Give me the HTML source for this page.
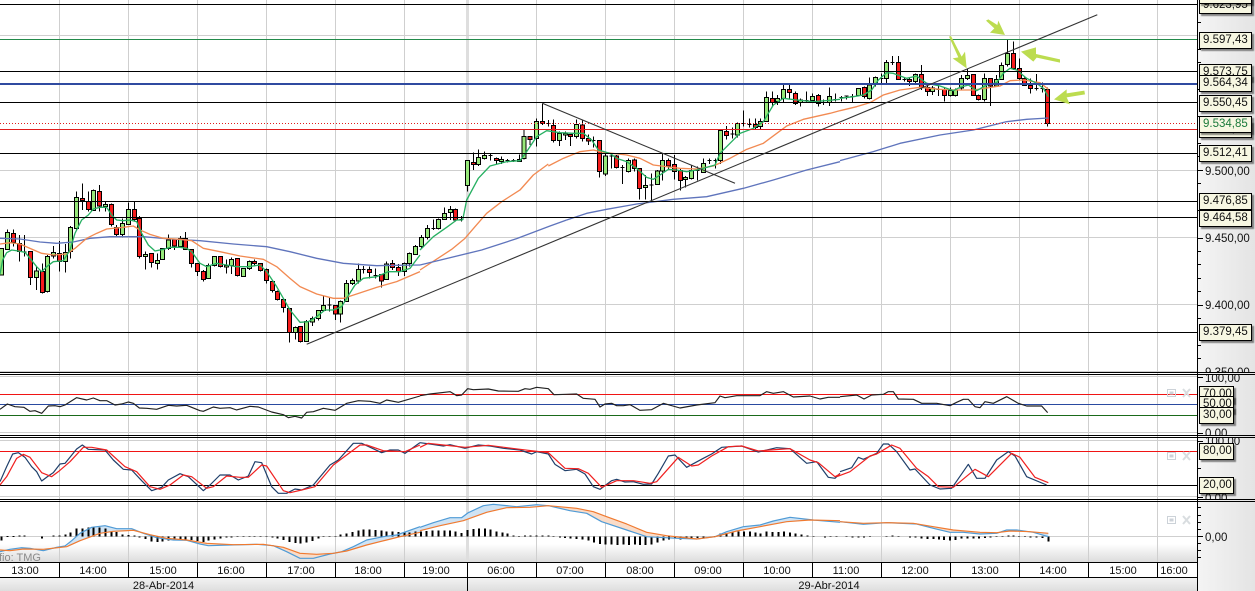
<!DOCTYPE html>
<html><head><meta charset="utf-8"><title>Chart</title>
<style>
html,body{margin:0;padding:0;background:#fff}
#p{position:relative;width:1255px;height:591px;overflow:hidden;font-family:"Liberation Sans",sans-serif}
svg{position:absolute;left:0;top:0}
text{font-family:"Liberation Sans",sans-serif;font-size:11px;fill:#111}
.l{position:absolute;left:1199px;height:15px;line-height:14px;border:1px solid #000;background:#f7f7e2;box-shadow:2px 2px 1px rgba(0,0,0,.45);font-size:11.5px;color:#111;padding-left:3px;box-sizing:content-box;width:48px;white-space:nowrap;overflow:hidden}
.s{width:30px}
.w{fill:none;stroke:#000;stroke-width:3}
.g{fill:#97e87a;stroke:#000;stroke-width:3}
.r{fill:#f61c1c;stroke:#000;stroke-width:3}
.ma{fill:none;stroke-width:4;stroke-linejoin:round}
.gr{stroke:#27b062}.or{stroke:#f28a52}.bl{stroke:#5f74bc}
.rs{fill:none;stroke:#222;stroke-width:3.5;stroke-linejoin:round}
.sb{fill:none;stroke:#1f3f6a;stroke-width:3.6;stroke-linejoin:round}
.sr{fill:none;stroke:#f02020;stroke-width:3.6;stroke-linejoin:round}
.mb{fill:none;stroke:#4f9bd6;stroke-width:3.6;stroke-linejoin:round}
.mo{fill:none;stroke:#f07a30;stroke-width:3.6;stroke-linejoin:round}
.h{fill:none;stroke:#000;stroke-width:6}
.fb{fill:#cfe3f4}.fo{fill:#fadcc8}
.arrow{fill:#bcdc50}
</style></head><body><div id="p">
<svg width="1255" height="591" viewBox="0 0 1255 591">
<defs>
<linearGradient id="gb" x1="0" y1="0" x2="0" y2="1"><stop offset="0" stop-color="#fff"/><stop offset="1" stop-color="#dcdcdc"/></linearGradient>
<linearGradient id="gd" x1="0" y1="0" x2="0" y2="1"><stop offset="0" stop-color="#f4f4f4"/><stop offset="1" stop-color="#dedede"/></linearGradient>
<linearGradient id="gr" x1="0" y1="0" x2="1" y2="0"><stop offset="0" stop-color="#f4f4f4"/><stop offset="1" stop-color="#e4e4e4"/></linearGradient>
<clipPath id="c0"><rect x="1198" y="0" width="57" height="372"/></clipPath>
<clipPath id="c1"><rect x="1198" y="375" width="57" height="60"/></clipPath>
<clipPath id="c2"><rect x="1198" y="438" width="57" height="61"/></clipPath>
</defs>
<rect x="0" y="544" width="1198" height="18" fill="url(#gb)"/>
<!-- grid -->
<g fill="#cfcfcf" shape-rendering="crispEdges">
<rect x="59" y="0" width="1" height="562"/><rect x="128" y="0" width="1" height="562"/><rect x="197" y="0" width="1" height="562"/><rect x="266" y="0" width="1" height="562"/><rect x="335" y="0" width="1" height="562"/><rect x="404" y="0" width="1" height="562"/>
<rect x="466" y="0" width="3" height="562" fill="#dedede"/>
<rect x="536" y="0" width="1" height="562"/><rect x="605" y="0" width="1" height="562"/><rect x="674" y="0" width="1" height="562"/><rect x="743" y="0" width="1" height="562"/><rect x="812" y="0" width="1" height="562"/><rect x="881" y="0" width="1" height="562"/><rect x="950" y="0" width="1" height="562"/><rect x="1019" y="0" width="1" height="562"/><rect x="1088" y="0" width="1" height="562"/><rect x="1157" y="0" width="1" height="562"/>
<rect x="0" y="35" width="1197" height="1"/><rect x="0" y="102" width="1197" height="1"/><rect x="0" y="170" width="1197" height="1"/><rect x="0" y="237" width="1197" height="1"/><rect x="0" y="304" width="1197" height="1"/><rect x="0" y="371" width="1197" height="1"/>
<rect x="0" y="376" width="1197" height="1"/><rect x="0" y="432" width="1197" height="1"/><rect x="0" y="440" width="1197" height="1"/><rect x="0" y="496" width="1197" height="1"/><rect x="0" y="536" width="1197" height="1"/>
</g>
<!-- candles Z1 -->
<g transform="translate(0,170) scale(.33333)" shape-rendering="crispEdges">
<path class="w" d="M4 235V315M22 178V240M40 178V230M58 195V275M74 195V260M68 246h12M91 245V345M109 290V360M127 280V370M142 255V368M160 228V265M178 213V305M196 222V308M211 168V265M229 65V180M247 40V120M265 65V125M280 58V123M298 45V125M316 95V125M334 100V170M349 165V200M367 145V202M385 98V150M403 95V155M418 138V265M436 245V298M454 250V293M472 250V298M487 235V270M505 193V240M523 205V240M541 198V232M556 186V240M574 238V292M592 280V318M610 300V335M625 280V327M643 258V290M661 258V292M679 268V310M694 262V312M712 265V320M730 295V320M748 272V300M763 268V290M781 280V305M799 295V340M817 334V368M832 362V392M850 388V428M868 415V518M886 470V508M902 468V518M919 450V516M937 440V468M955 420V452M970 376V423M988 384V425M982 405h12M1006 405V450M1021 392V458M1039 330V395M1057 325V345M1075 280V340M1090 288V310M1084 299h12M1108 290V325M1126 295V325M1120 317h12M1144 312V352M1159 275V330M1177 270V300M1195 282V318M1213 278V318M1228 248V290M1246 225V255"/>
<path class="g" d="M-2 235h12V315h-12zM16 187h12V238h-12zM103 303h12V322h-12zM136 260h12V364h-12zM154 248h12V258h-12zM190 247h12V275h-12zM205 172h12V245h-12zM223 82h12V175h-12zM274 61h12V121h-12zM310 103h12V109h-12zM361 160h12V193h-12zM379 118h12V163h-12zM430 253h12V260h-12zM466 271h12V281h-12zM481 235h12V269h-12zM499 210h12V235h-12zM535 206h12V229h-12zM619 286h12V325h-12zM637 259h12V286h-12zM673 286h12V291h-12zM688 268h12V286h-12zM724 295h12V319h-12zM742 275h12V296h-12zM880 472h12V487h-12zM913 455h12V514h-12zM931 446h12V456h-12zM949 421h12V445h-12zM964 406h12V421h-12zM1015 394h12V432h-12zM1033 340h12V394h-12zM1051 331h12V340h-12zM1069 298h12V333h-12zM1153 282h12V328h-12zM1207 281h12V304h-12zM1222 250h12V280h-12zM1240 229h12V253h-12z"/>
<path class="r" d="M34 190h12V218h-12zM52 220h12V245h-12zM85 245h12V322h-12zM121 305h12V367h-12zM172 250h12V275h-12zM241 85h12V92h-12zM259 94h12V118h-12zM292 64h12V108h-12zM328 103h12V163h-12zM343 172h12V193h-12zM397 118h12V148h-12zM412 145h12V260h-12zM448 250h12V277h-12zM517 208h12V228h-12zM550 206h12V238h-12zM568 238h12V280h-12zM586 280h12V305h-12zM604 304h12V328h-12zM655 259h12V290h-12zM706 265h12V317h-12zM757 275h12V281h-12zM775 281h12V302h-12zM793 298h12V331h-12zM811 334h12V362h-12zM826 365h12V389h-12zM844 389h12V413h-12zM862 415h12V487h-12zM896 469h12V515h-12zM1000 406h12V432h-12zM1102 298h12V307h-12zM1138 313h12V333h-12zM1171 281h12V292h-12zM1189 293h12V305h-12z"/>
</g>
<!-- candles Z9 -->
<g transform="translate(400,140) scale(.33333)" shape-rendering="crispEdges">
<path class="w" d="M64 285V325M82 255V298M100 238V270M94 265h12M115 235V268M133 202V240M151 198V240M166 205V245M185 228V245M179 238h12M203 60V155M221 38V90M236 28V78M254 35V58M272 42V62M266 47h12M290 52V72M305 50V72M323 57V68M317 62h12M341 57V66M335 62h12M359 44V66"/>
<path class="g" d="M58 292h12V320h-12zM76 265h12V292h-12zM109 238h12V265h-12zM127 220h12V238h-12zM145 208h12V218h-12zM197 62h12V137h-12zM230 52h12V74h-12zM248 46h12V55h-12zM299 58h12V65h-12zM353 58h12V64h-12z"/>
<path class="r" d="M160 208h12V240h-12zM215 68h12V73h-12zM284 56h12V62h-12z"/>
</g>
<!-- candles Z2 -->
<g transform="translate(420,90) scale(.33333)" shape-rendering="crispEdges">
<path class="w" d="M312 120V208M330 140V165M349 85V170M367 40V105M385 90V110M379 101h12M400 88V158M418 125V168M436 125V150M451 133V168M469 88V145M487 92V155M505 133V165M520 140V172M514 151h12M538 150V262M556 190V258M574 190V235M568 198h12M589 195V235M607 225V282M601 232h12M625 205V248M643 205V245M658 235V328M676 255V328M694 250V332M688 285h12M712 240V285M727 190V272M745 205V240M763 195V268M781 235V302M796 258V292M814 225V268M832 230V272M826 242h12M850 205V248M868 205V222M862 212h12M886 205V235M880 212h12M901 122V222M919 108V148M937 112V145M931 132h12M952 98V142M970 62V110M964 100h12M988 85V112M982 103h12M1006 85V118M1021 85V117M1039 5V96M1057 5V48M1072 15V45"/>
<path class="g" d="M306 140h12V205h-12zM343 94h12V145h-12zM412 130h12V152h-12zM430 130h12V135h-12zM463 103h12V140h-12zM550 198h12V252h-12zM619 212h12V245h-12zM670 286h12V292h-12zM706 243h12V283h-12zM721 212h12V243h-12zM790 262h12V268h-12zM808 241h12V265h-12zM844 220h12V247h-12zM895 122h12V212h-12zM946 100h12V135h-12zM1015 95h12V110h-12zM1033 22h12V95h-12zM1066 25h12V35h-12z"/>
<path class="r" d="M324 140h12V148h-12zM361 94h12V100h-12zM394 106h12V152h-12zM445 133h12V140h-12zM481 105h12V146h-12zM499 145h12V153h-12zM532 151h12V245h-12zM583 198h12V233h-12zM637 210h12V235h-12zM652 235h12V295h-12zM739 212h12V228h-12zM757 223h12V244h-12zM775 241h12V271h-12zM913 124h12V136h-12zM1000 103h12V112h-12zM1051 25h12V37h-12z"/>
</g>
<!-- candles Z10 -->
<g transform="translate(720,50) scale(.33333)" shape-rendering="crispEdges">
<path class="w" d="M190 102V158M208 102V145M226 125V165M241 146V170M259 125V158M253 152h12M277 130V158M295 132V170M310 148V165M304 158h12M328 112V168M346 130V155M340 148h12M364 138V155M358 142h12M379 136V148M373 138h12M397 132V158M391 140h12M415 114V140M433 110V145M448 82V148M466 80V110M484 70V102M478 85h12M499 30V100M517 18V45M511 38h12"/>
<path class="g" d="M184 118h12V146h-12zM235 150h12V158h-12zM271 139h12V151h-12zM322 140h12V158h-12zM409 116h12V136h-12zM442 105h12V146h-12zM460 82h12V103h-12zM493 38h12V85h-12z"/>
<path class="r" d="M202 118h12V127h-12zM220 130h12V160h-12zM289 136h12V160h-12zM427 112h12V140h-12z"/>
</g>
<!-- candles Z3 -->
<g transform="translate(840,0) scale(.33333)" shape-rendering="crispEdges">
<path class="w" d="M175 168V240M193 232V245M187 238h12M208 232V258M226 220V250M244 195V270M262 255V288M277 258V285M295 255V288M289 269h12M313 262V305M331 262V290M346 265V290M364 225V268M382 205V240M400 222V288M415 284V302M433 220V305M451 236V318M469 225V260M484 188V240M502 120V200M520 125V210M538 175V240M553 232V258M571 235V280M589 222V272M583 266h12M607 248V278M601 266h12M622 262V380"/>
<path class="g" d="M220 224h12V244h-12zM271 264h12V274h-12zM325 272h12V286h-12zM340 270h12V287h-12zM358 235h12V264h-12zM376 226h12V236h-12zM427 235h12V299h-12zM463 238h12V258h-12zM478 196h12V238h-12zM496 160h12V193h-12z"/>
<path class="r" d="M169 187h12V238h-12zM202 238h12V244h-12zM238 224h12V262h-12zM256 262h12V275h-12zM307 269h12V286h-12zM394 224h12V287h-12zM409 287h12V299h-12zM445 236h12V258h-12zM514 160h12V206h-12zM532 206h12V236h-12zM547 236h12V256h-12zM565 256h12V266h-12zM616 268h12V371h-12z"/>
</g>
<!-- MAs -->
<g transform="translate(0,170) scale(.33333)">
<polyline class="ma bl" points="0,205 60,207 120,216 170,220 220,216 270,205 330,200 430,200 510,207 600,212 700,222 800,230 870,245 950,265 1030,280 1130,287 1260,285"/>
<polyline class="ma or" points="0,222 30,218 60,222 90,235 125,250 160,255 200,252 225,235 260,205 290,190 320,177 370,172 400,168 420,180 450,193 490,205 540,208 575,212 610,235 660,245 720,258 790,268 830,290 870,325 900,350 950,372 1000,385 1030,385 1070,372 1130,352 1190,335 1260,305"/>
<polyline class="ma gr" points="0,312 8,270 20,248 35,240 55,243 75,247 90,265 110,290 125,305 140,290 160,275 190,272 210,240 225,190 245,150 265,135 280,117 300,112 320,112 335,135 350,150 370,152 390,150 410,155 425,190 445,225 465,243 490,238 510,232 540,232 560,235 575,245 600,280 620,290 650,280 680,285 710,290 745,290 780,285 800,305 830,350 850,385 870,420 900,457 925,455 950,440 975,420 1000,420 1025,410 1040,385 1065,345 1090,325 1130,320 1165,305 1200,305 1230,295 1260,255"/>
</g>
<g transform="translate(400,140) scale(.33333)">
<polyline class="ma or" points="60,390 155,328 195,295 225,260 260,220 305,185 360,150 400,105 445,72"/>
<polyline class="ma bl" points="60,375 245,330 350,296 450,258 500,240"/>
<polyline class="ma gr" points="60,330 100,290 140,262 170,240 188,240"/>
</g>
<g transform="translate(420,90) scale(.33333)">
<polyline class="ma bl" points="440,390 500,370 560,358 650,342 760,328 860,320 970,295 1060,270 1160,240 1260,215"/>
<polyline class="ma or" points="385,228 430,205 480,185 520,180 550,187 620,195 660,205 700,225 780,235 830,237 880,228 930,205 980,178 1030,160 1100,108 1150,88 1230,70 1260,62"/>
<polyline class="ma gr" points="128,390 140,330 175,265 210,228 260,215 300,212 320,185 350,140 380,122 420,128 460,130 490,130 515,150 535,180 570,190 590,205 620,215 650,235 680,262 700,268 720,255 745,238 770,240 800,245 830,240 860,232 885,225 900,190 930,160 960,130 1000,115 1030,95 1060,45 1090,25 1130,30 1180,35 1240,30 1260,28"/>
</g>
<g transform="translate(840,0) scale(.33333)">
<polyline class="ma bl" points="0,482 100,455 180,430 300,405 400,390 500,365 560,358 625,354"/>
<polyline class="ma or" points="0,332 50,320 90,308 130,285 180,270 240,262 300,268 350,270 400,270 480,258 510,242 550,240 600,248 625,268"/>
<polyline class="ma gr" points="0,295 40,290 70,285 95,270 115,240 140,218 160,220 200,235 230,228 260,250 300,258 340,272 360,262 385,255 410,272 440,255 470,248 490,220 510,205 530,210 560,235 590,250 610,265 625,290"/>
</g>
<!-- h lines -->
<g shape-rendering="crispEdges">
<rect x="0" y="4" width="1197" height="1"/><rect x="0" y="71" width="1197" height="1"/><rect x="0" y="102" width="1197" height="1"/><rect x="0" y="153" width="1197" height="1"/><rect x="0" y="201" width="1197" height="1"/><rect x="0" y="217" width="1197" height="1"/><rect x="0" y="332" width="1197" height="1"/>
<rect x="0" y="39" width="1197" height="1" fill="#238a4a"/>
<rect x="0" y="83" width="1197" height="2" fill="#2f4aa0"/>
<rect x="0" y="129" width="1197" height="1" fill="#e01c1c"/>
<line x1="0" y1="123.5" x2="1197" y2="123.5" stroke="#e01c1c" stroke-width="1" stroke-dasharray="1 2"/>
<rect x="0" y="394" width="1197" height="1" fill="#f01414"/>
<rect x="0" y="404" width="1197" height="1" fill="#2a4aa0"/>
<rect x="0" y="415" width="1197" height="1" fill="#1a6a1a"/>
<rect x="0" y="451" width="1197" height="1" fill="#f01414"/>
<rect x="0" y="485" width="1197" height="1"/>
</g>
<!-- trend lines -->
<line x1="306.7" y1="344.3" x2="1097.3" y2="14.7" stroke="#333" stroke-width="1.1"/>
<line x1="542.3" y1="103.3" x2="735" y2="183.3" stroke="#333" stroke-width="1.1"/>
<!-- arrows -->
<g transform="translate(840,0) scale(.33333)" class="arrow">
<polygon points="327,110 333,108 365,170 375,155 380,205 338,175 355,172"/>
<polygon points="438,62 445,58 472,75 475,62 495,105 450,98 463,85"/>
<polygon points="660,178 660,188 590,173 580,185 543,155 588,142 588,162"/>
<polygon points="733,272 735,283 680,292 690,313 642,298 680,268 680,280"/>
</g>
<!-- RSI -->
<g transform="translate(0,370) scale(.33333)"><polyline class="rs" points="0,118 22,102 45,110 72,112 90,124 105,122 125,130 145,108 165,107 180,110 195,105 230,83 260,90 280,84 300,92 320,92 345,105 365,102 385,96 400,100 418,114 440,115 470,118 505,106 530,108 560,106 600,122 610,124 640,111 660,115 690,113 710,120 750,109 775,111 815,126 850,134 865,143 885,139 905,144 920,127 940,125 970,115 1005,121 1040,100 1075,92 1110,94 1140,100 1160,90 1195,97 1260,78"/>
<polyline class="sb" points="0,335 20,290 38,252 55,248 75,262 95,290 110,305 125,333 145,318 160,308 180,282 195,280 230,237 247,225 265,238 315,240 340,270 370,298 395,300 425,332 455,362 485,352 505,330 540,311 565,320 610,362 630,345 660,315 690,315 715,330 745,318 765,275 785,278 815,350 835,370 860,370 885,357 905,360 940,345 990,285 1015,270 1060,220 1085,220 1145,248 1170,240 1195,240 1215,250 1260,218"/>
<polyline class="sr" points="0,345 20,320 50,265 70,253 90,262 125,308 155,320 175,305 210,275 250,232 275,232 320,240 375,290 410,305 450,350 480,358 510,345 550,315 575,320 620,355 640,350 680,318 720,322 745,322 785,285 800,288 850,362 870,368 905,360 945,350 1000,285 1040,255 1080,225 1100,225 1150,242 1215,245 1260,225"/>
<polygon class="fb" points="200,530 215,512 240,490 275,472 315,467 350,476 395,476 400,481 340,484 300,490 240,512"/>
<polygon class="fo" points="400,481 430,490 470,503 520,510 560,511 600,522 625,527 700,524 620,520 560,510 500,505 450,494"/>
<polygon class="fo" points="790,523 820,527 860,545 900,565 940,565 990,552 1000,550 950,553 900,550 850,532"/>
<polygon class="fb" points="1000,550 1025,545 1060,530 1100,510 1150,500 1190,495 1260,470 1260,487 1200,500 1160,510 1100,525 1040,543"/>
<polygon class="fb" points="0,545 30,538 65,533 90,535 130,538 70,537 30,542"/>
<path class="h" shape-rendering="crispEdges" d="M4 499V512M22 498V501M40 498V501M58 497V500M74 497V500M126 499V505M160 497V500M178 497V500M196 494V499M212 487V499M229 476V499M247 475V499M265 473V499M280 472V499M298 472V499M316 475V499M334 486V499M349 486V499M367 494V499M385 495V499M403 497V499M418 499V502M436 499V507M454 499V514M472 499V516M487 499V515M505 499V511M523 499V510M541 499V508M556 499V508M574 499V510M592 499V513M610 499V516M625 499V512M643 499V508M661 499V505M679 499V503M694 499V502M712 499V501M730 499V501M748 499V501M763 499V501M781 499V501M799 499V501M817 499V503M832 499V505M850 499V510M868 499V516M886 499V519M902 499V521M919 499V518M937 499V513M955 499V506M970 499V501M988 498V500M1006 498V500M1021 494V499M1039 491V499M1057 486V499M1075 481V499M1090 478V499M1108 478V499M1126 480V499M1144 482V499M1159 484V499M1177 485V499M1195 486V499M1213 487V499M1228 488V499M1246 485V499"/>
<polyline class="mb" points="0,545 30,538 65,533 90,535 130,542 170,532 195,528 215,512 240,490 275,472 315,467 350,476 395,476 430,490 470,503 520,510 560,511 600,522 625,527 690,525 770,523 820,527 860,545 900,565 940,565 990,552 1025,545 1060,530 1100,510 1150,500 1190,495 1260,470"/>
<polyline class="mo" points="0,540 30,542 70,537 130,538 200,530 240,512 300,490 340,484 400,481 450,494 500,505 560,510 620,520 700,524 790,523 850,532 900,550 950,553 1000,550 1040,543 1100,525 1160,510 1200,500 1260,487"/>
</g>
<g transform="translate(420,370) scale(.33333)">
<polyline class="rs" points="0,77 30,72 90,65 110,77 125,75 143,56 160,59 205,57 235,63 295,64 315,56 330,58 350,52 385,56 402,74 440,73 470,72 490,85 525,88 540,111 555,102 575,100 590,107 610,107 630,104 660,121 695,119 730,100 780,114 830,105 885,98 900,78 915,83 950,77 1020,77 1040,65 1060,70 1090,65 1120,81 1170,78 1200,87 1225,82 1260,82"/>
<polyline class="sb" points="0,218 30,222 70,228 90,224 135,235 175,225 210,228 250,235 300,240 335,252 350,245 385,252 405,283 435,302 470,298 495,312 520,350 540,358 575,332 590,328 615,336 640,335 670,343 695,342 715,310 745,258 765,255 800,292 850,265 875,252 905,232 965,228 1015,246 1070,233 1110,236 1160,280 1190,275 1225,322 1245,325 1260,310"/>
<polyline class="sr" points="0,232 25,220 70,225 135,232 205,226 300,238 385,248 435,295 475,296 505,310 545,352 590,332 640,332 690,340 710,335 775,262 815,288 835,285 875,258 925,230 965,228 1015,243 1050,240 1110,236 1170,270 1195,278 1245,320 1260,312"/>
<polygon class="fb" points="0,472 40,458 90,443 125,443 145,428 190,407 220,403 290,410 350,404 385,407 330,412 260,413 200,427 130,452 60,467 0,482"/>
<polygon class="fo" points="385,407 450,422 500,430 545,455 620,480 680,500 770,505 830,507 740,497 680,487 620,462 560,440 520,425 470,415"/>
<polygon class="fb" points="885,500 920,485 970,470 1020,465 1060,453 1110,442 1180,450 1170,450 1100,455 1020,470 950,483"/>
<polygon class="fo" points="1180,450 1260,457 1260,452 1170,450"/>
<path class="h" shape-rendering="crispEdges" d="M3 484V499M20 483V499M38 482V499M55 481V499M73 481V499M90 482V499M107 484V499M125 489V499M142 480V499M160 477V499M177 475V499M195 476V499M212 478V499M230 484V499M247 487V499M262 490V499M280 497V499M297 498V499M315 497V499M332 497V499M350 496V499M367 496V499M385 497V499M400 498V500M420 499V503M435 499V504M452 499V506M470 499V507M487 499V509M505 499V512M522 499V517M540 499V522M557 499V524M575 499V524M592 499V525M610 499V524M627 499V525M645 499V524M660 499V525M677 499V525M695 499V523M712 499V518M730 499V512M747 499V508M765 499V506M782 499V508M800 499V507M815 499V506M832 499V504M850 499V502M867 499V500M885 498V499M902 490V499M920 489V499M937 487V499M955 485V499M972 484V499M990 485V499M1007 488V499M1022 490V499M1040 485V499M1057 486V499M1075 486V499M1092 485V499M1110 487V499M1127 491V499M1145 494V499M1162 497V499M1180 498V499M1197 499V500M1215 499V502M1232 499V501M1250 498V500"/>
<polyline class="mb" points="0,472 40,458 90,443 125,443 145,428 190,407 220,403 290,410 350,404 385,407 450,422 500,430 545,455 620,480 680,500 770,505 830,507 885,500 920,485 970,470 1020,465 1060,453 1110,442 1180,450 1260,457"/>
<polyline class="mo" points="0,482 60,467 130,452 200,427 260,413 330,412 385,407 470,415 520,425 560,440 620,462 680,487 740,497 830,507 885,500 950,483 1020,470 1100,455 1170,450 1260,452"/>
</g>
<g transform="translate(720,370) scale(.33333)">
<polyline class="rs" points="360,80 410,75 432,87 455,75 490,73 505,65 520,65 535,87 580,88 605,100 650,100 690,107 710,97 730,88 745,88 765,110 780,113 795,95 820,100 860,80 895,100 920,108 965,108 983,128"/>
<polyline class="sb" points="360,305 395,293 415,262 430,268 470,250 490,222 505,222 530,245 570,300 585,297 630,345 660,357 695,355 745,283 770,325 795,325 830,270 865,245 885,258 920,320 980,345"/>
<polyline class="sr" points="350,320 390,305 450,258 470,252 515,225 540,235 590,295 625,320 655,350 700,352 765,298 805,320 875,250 900,262 945,322 985,338"/>
<polygon class="fo" points="590,462 640,475 690,487 730,487 780,492 830,490 830,488 780,487 700,480 640,470 580,460"/>
<polygon class="fb" points="860,480 890,480 940,487 985,500 985,490 930,485 870,483"/>
<path class="h" shape-rendering="crispEdges" d="M362 499V500M380 499V501M398 499V502M415 499V502M432 499V502M450 499V501M468 499V500M500 498V499M518 497V499M535 498V499M552 499V500M570 499V502M587 499V503M605 499V505M622 499V507M640 499V507M657 499V508M672 499V510M690 499V512M707 499V510M725 499V506M742 499V505M760 499V505M777 499V506M795 499V504M812 499V502M830 499V501M847 498V499M865 496V499M880 496V499M897 498V499M915 499V501M932 499V503M950 499V503M967 499V504M985 499V514"/>
<polyline class="mb" points="360,455 430,463 500,458 590,462 640,475 690,487 730,487 780,492 830,490 860,480 890,480 940,487 985,500"/>
<polyline class="mo" points="360,455 430,460 500,458 580,460 640,470 700,480 780,487 830,488 870,483 930,485 985,490"/>
</g>
<!-- panel icons -->
<g fill="none" stroke="#ccd2d8" stroke-width="1">
<rect x="1167.5" y="389.5" width="8" height="7"/><rect x="1170" y="392" width="3" height="2" fill="#ccd2d8"/>
<rect x="1167.5" y="452.5" width="8" height="7"/><rect x="1170" y="455" width="3" height="2" fill="#ccd2d8"/>
<rect x="1167.5" y="516.5" width="8" height="7"/><rect x="1170" y="519" width="3" height="2" fill="#ccd2d8"/>
<path stroke="#d9dde0" stroke-width="2" d="M1183 389l7 8m0-8l-7 8M1183 452l7 8m0-8l-7 8M1183 516l7 8m0-8l-7 8"/>
</g>
<text x="-1" y="561" style="fill:#8a8a8a">fio: TMG</text>
<!-- time axis -->
<rect x="0" y="562" width="1197" height="15" fill="#fff"/>
<rect x="0" y="577" width="1255" height="14" fill="url(#gd)"/>
<g shape-rendering="crispEdges">
<rect x="0" y="562" width="1197" height="1"/><rect x="0" y="577" width="1197" height="1"/>
<rect x="59" y="562" width="1" height="15"/><rect x="128" y="562" width="1" height="15"/><rect x="197" y="562" width="1" height="15"/><rect x="266" y="562" width="1" height="15"/><rect x="335" y="562" width="1" height="15"/><rect x="404" y="562" width="1" height="15"/><rect x="467" y="562" width="1" height="29"/><rect x="536" y="562" width="1" height="15"/><rect x="605" y="562" width="1" height="15"/><rect x="674" y="562" width="1" height="15"/><rect x="743" y="562" width="1" height="15"/><rect x="812" y="562" width="1" height="15"/><rect x="881" y="562" width="1" height="15"/><rect x="950" y="562" width="1" height="15"/><rect x="1019" y="562" width="1" height="15"/><rect x="1088" y="562" width="1" height="15"/><rect x="1157" y="562" width="1" height="15"/>
</g>
<g text-anchor="middle">
<text x="25" y="574">13:00</text><text x="93" y="574">14:00</text><text x="163" y="574">15:00</text><text x="231" y="574">16:00</text><text x="301" y="574">17:00</text><text x="368" y="574">18:00</text><text x="436" y="574">19:00</text><text x="501" y="574">06:00</text><text x="570" y="574">07:00</text><text x="640" y="574">08:00</text><text x="708" y="574">09:00</text><text x="777" y="574">10:00</text><text x="846" y="574">11:00</text><text x="915" y="574">12:00</text><text x="985" y="574">13:00</text><text x="1053" y="574">14:00</text><text x="1123" y="574">15:00</text><text x="1174" y="574">16:00</text>
<text x="163.5" y="589">28-Abr-2014</text><text x="829" y="589">29-Abr-2014</text>
</g>
<!-- right panel -->
<rect x="1198" y="0" width="57" height="591" fill="url(#gr)"/>
<g fill="none" stroke="#000" shape-rendering="crispEdges">
<path d="M1198 22.500h3M1198 49.500h3M1198 62.500h3M1198 89.500h3M1198 116.500h3M1198 143.500h3M1198 156.500h3M1198 170.500h5M1198 183.500h3M1198 210.500h3M1198 238.500h5M1198 251.500h3M1198 264.500h3M1198 278.500h3M1198 291.500h3M1198 305.500h5M1198 318.500h3M1198 345.500h3M1198 358.500h3"/>
<path d="M1198 377.500h5M1198 433.500h5M1198 441.500h5M1198 468.500h3M1198 497.500h5M1198 507.500h3M1198 515.500h3M1198 522.500h3M1198 529.500h3M1198 536.500h5M1198 543.500h3M1198 550.500h3M1198 557.500h3"/>
</g>
<g>
<g clip-path="url(#c0)"><text x="1205" y="175" style="font-size:11.5px">9.500,00</text><text x="1205" y="242" style="font-size:11.5px">9.450,00</text><text x="1205" y="309" style="font-size:11.5px">9.400,00</text><text x="1205" y="376" style="font-size:11.5px">9.350,00</text></g>
<g clip-path="url(#c1)"><text x="1205" y="382" style="font-size:11.5px">100,00</text><text x="1205" y="437" style="font-size:11.5px">0,00</text></g>
<g clip-path="url(#c2)"><text x="1205" y="445" style="font-size:11.5px">100,00</text><text x="1205" y="502" style="font-size:11.5px">0,00</text></g>
<text x="1205" y="541" style="font-size:11.5px">0,00</text>
</g>
<g shape-rendering="crispEdges">
<rect x="1197" y="0" width="1" height="591"/>
<rect x="0" y="372" width="1255" height="1"/><rect x="0" y="374" width="1255" height="1"/>
<rect x="0" y="435" width="1255" height="1"/><rect x="0" y="437" width="1255" height="1"/>
<rect x="0" y="499" width="1255" height="1"/><rect x="0" y="501" width="1255" height="1"/>
</g>
</svg>
<div class="l" style="top:-3px">9.623,95</div>
<div class="l" style="top:-13px">9.636,10</div>
<div class="l" style="top:32px">9.597,43</div>
<div class="l" style="top:64px">9.573,75</div>
<div class="l" style="top:75px">9.564,34</div>
<div class="l" style="top:95px">9.550,45</div>
<div class="l" style="top:121px">9.528,12</div>
<div class="l" style="top:116px;color:#1a7a3a">9.534,85</div>
<div class="l" style="top:145px">9.512,41</div>
<div class="l" style="top:193px">9.476,85</div>
<div class="l" style="top:210px">9.464,58</div>
<div class="l" style="top:324px">9.379,45</div>
<div class="l s" style="top:386px">70,00</div>
<div class="l s" style="top:396px">50,00</div>
<div class="l s" style="top:407px">30,00</div>
<div class="l s" style="top:443px">80,00</div>
<div class="l s" style="top:477px">20,00</div>
</div></body></html>
